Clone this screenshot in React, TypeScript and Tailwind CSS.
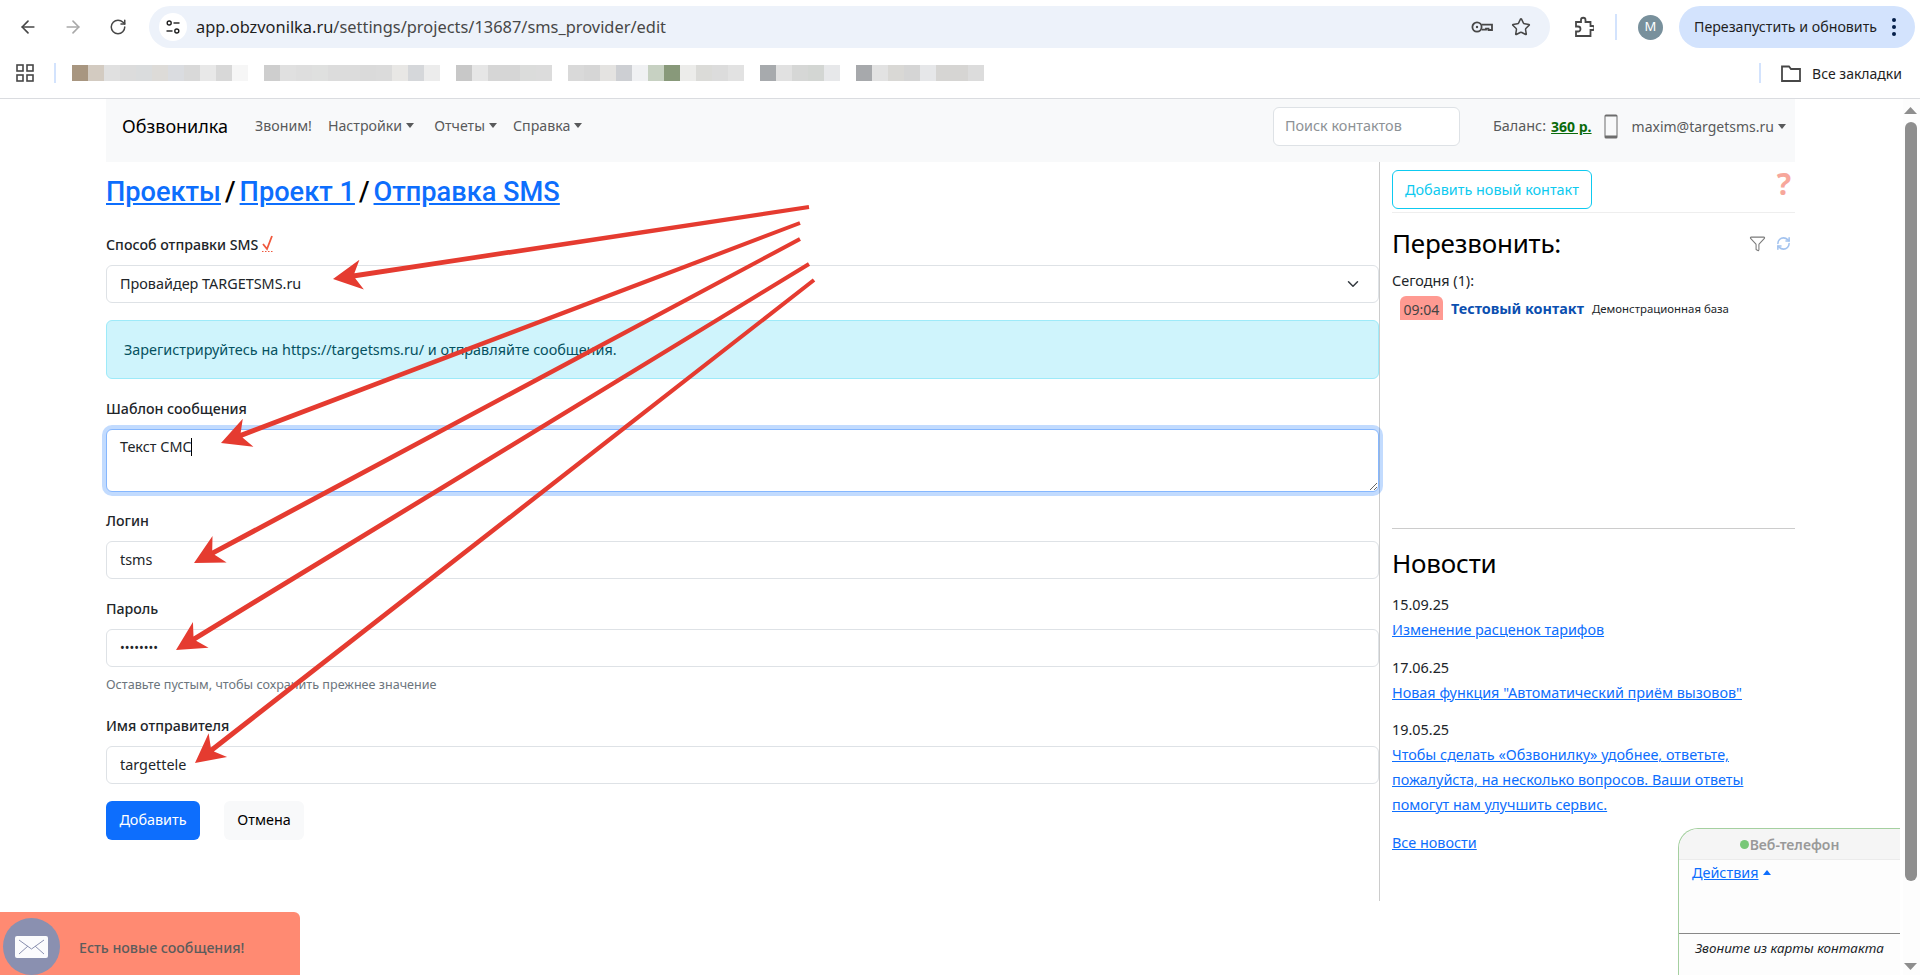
import { ArrowLeft, ArrowRight, RotateCw, Star, ChevronDown, Funnel, RefreshCw } from 'lucide-react';

const bookmarkGroups = [
  ['#a89680', '#d3cbc1', '#e0e0e0', '#dcdcdc', '#dadcdd', '#dddbd8', '#dadce0', '#d9d9d9', '#e8e8e8', '#d8d8d8', '#f6f6f6'],
  ['#cecece', '#e0e0e0', '#dedede', '#dfe0df', '#dcdcdc', '#dcdcdc', '#dadada', '#dbdbdb', '#e8e7e5', '#d5d7da', '#ececec'],
  ['#c8c8c8', '#e6e6e6', '#d6d6d6', '#d6d6d6', '#dbdcdb', '#dcdcdc'],
  ['#d9d9d9', '#d6d6d6', '#e4e3e1', '#cdcfd3', '#f0f1f3', '#c7d1c2', '#88997a', '#ececea', '#dbdbd8', '#dcdcdc', '#e2e2e2'],
  ['#a7aaad', '#e1e1e1', '#d6d7d6', '#d3d6d3', '#e7e8ea'],
  ['#a7a9ac', '#e2e2e2', '#d9d8d5', '#d5d5d5', '#e6e7e9', '#d6d5d3', '#d6d5d3', '#dcdcdc'],
];

const arrows = [
  { tail: [809, 207], tip: [333, 279] },
  { tail: [800, 223], tip: [221, 443] },
  { tail: [800, 239], tip: [194, 563] },
  { tail: [809, 264], tip: [176, 650] },
  { tail: [814, 280], tip: [195, 763] },
];

function arrowPoints(tail: number[], tip: number[]) {
  const dx = tip[0] - tail[0];
  const dy = tip[1] - tail[1];
  const len = Math.hypot(dx, dy);
  const ux = dx / len;
  const uy = dy / len;
  const nx = -uy;
  const ny = ux;
  const at = (back: number, side: number) =>
    `${tip[0] - ux * back + nx * side},${tip[1] - uy * back + ny * side}`;
  return [
    at(len, 2),
    at(22, 2.5),
    at(29, 15),
    at(0, 0),
    at(29, -15),
    at(22, -2.5),
    at(len, -2),
  ].join(' ');
}

function Caret({ up = false, color = '#595a5b' }: { up?: boolean; color?: string }) {
  return (
    <svg width="8" height="5" viewBox="0 0 8 5" className="ml-1 shrink-0">
      <path d={up ? 'M0 5 L4 0 L8 5 Z' : 'M0 0 L8 0 L4 5 Z'} fill={color} />
    </svg>
  );
}

function Field({ label, value, type = 'text', top }: { label: string; value: string; type?: string; top: string }) {
  return (
    <div className={top}>
      <label className="block h-[21px] text-[14.2px] leading-[19px] font-medium text-[#212529]">{label}</label>
      <input
        type={type}
        value={value}
        readOnly
        className={`mt-[9px] block h-[38px] w-full rounded-[6px] border border-[#dee2e6] bg-white px-[13px] pb-[2px] text-[#212529] outline-none ${type === 'password' ? 'text-[12.6px]' : 'text-[14.4px]'}`}
      />
    </div>
  );
}

function BrowserBar() {
  return (
    <div className="h-[98px] shrink-0 border-b border-[#dadce0] box-content text-[#1f1f1f]">
      <div className="flex h-[50px] items-center pt-[4px]">
        <ArrowLeft size={20} strokeWidth={2} className="ml-[18px] text-[#474747]" />
        <ArrowRight size={20} strokeWidth={2} className="ml-[25px] text-[#a9a9a9]" />
        <RotateCw size={18} strokeWidth={2} className="ml-[26px] text-[#474747]" />
        <div className="ml-[22px] flex h-[42px] w-[1401px] items-center rounded-full bg-[#edf2fa]">
          <div className="ml-[10px] flex h-[28px] w-[28px] items-center justify-center rounded-full bg-white">
            <svg width="16" height="16" viewBox="0 0 16 16" fill="none" stroke="#1f1f1f" strokeWidth="1.4">
              <circle cx="4.2" cy="4" r="2" />
              <path d="M8.5 4 H14.5" />
              <circle cx="11.8" cy="12" r="2" />
              <path d="M1.5 12 H7.5" />
            </svg>
          </div>
          <div className="ml-[9px] text-[16.4px] text-[#474747]">
            <span className="text-[#1f1f1f]">app.obzvonilka.ru</span>/settings/projects/13687/sms_provider/edit
          </div>
          <svg width="22" height="14" viewBox="0 0 22 14" fill="none" stroke="#474747" strokeWidth="1.8" className="ml-auto">
            <circle cx="6" cy="7" r="4.6" />
            <circle cx="6" cy="7" r="1.2" fill="#474747" stroke="none" />
            <path d="M10.6 4.6 H21 V10 H17.5 V8.6 H15 V9.6 H10.6" />
          </svg>
          <Star size={20} strokeWidth={1.8} className="ml-[18px] mr-[19px] text-[#474747]" />
        </div>
        <svg width="20" height="22" viewBox="0 0 20 22" fill="none" stroke="#474747" strokeWidth="1.8" className="ml-[24px]">
          <path d="M2 6 H7 V4 A2.2 2.2 0 0 1 11.5 4 V6 H16.5 V10 H18.5 A1.8 1.8 0 0 1 18.5 14 H16.5 V20 H2 V15.5 H4 A2.4 2.4 0 0 0 4 10.5 H2 Z" />
        </svg>
        <div className="ml-[21px] h-[26px] w-[2px] bg-[#d3e3fd]" />
        <div className="ml-[21px] flex h-[25px] w-[25px] items-center justify-center rounded-full bg-[#78909c] text-[13px] text-white">M</div>
        <div className="ml-[16px] flex h-[42px] w-[236px] items-center rounded-full bg-[#d3e3fd] pl-[15px]">
          <span className="w-[198px] text-[14.2px] whitespace-nowrap">Перезапустить и обновить</span>
          <span className="flex flex-col gap-[3px]">
            <span className="h-[4px] w-[4px] rounded-full bg-[#041e49]" />
            <span className="h-[4px] w-[4px] rounded-full bg-[#041e49]" />
            <span className="h-[4px] w-[4px] rounded-full bg-[#041e49]" />
          </span>
        </div>
      </div>
      <div className="flex h-[48px] items-center pb-[2px]">
        <svg width="18" height="18" viewBox="0 0 18 18" fill="none" stroke="#474747" strokeWidth="1.6" className="ml-[16px]">
          <rect x="1" y="1" width="6" height="6" />
          <rect x="11" y="1" width="6" height="6" />
          <rect x="1" y="11" width="6" height="6" />
          <rect x="11" y="11" width="6" height="6" />
        </svg>
        <div className="ml-[20px] h-[20px] w-[2px] bg-[#d3e3fd]" />
        <div className="ml-[16px] flex gap-[16px] blur-[0.6px]">
          {bookmarkGroups.map((group, i) => (
            <div key={i} className="flex">
              {group.map((c, j) => (
                <div key={j} className="h-[16px] w-[16px]" style={{ backgroundColor: c }} />
              ))}
            </div>
          ))}
        </div>
        <div className="ml-auto h-[20px] w-[2px] bg-[#d3e3fd]" />
        <svg width="20" height="17" viewBox="0 0 20 17" fill="none" stroke="#474747" strokeWidth="1.8" className="ml-[20px]">
          <path d="M1 1.5 H8 L10 4 H19 V16 H1 Z" />
        </svg>
        <span className="ml-[11px] mr-[18px] text-[14px]">Все закладки</span>
      </div>
    </div>
  );
}

function TopNav() {
  return (
    <nav className="flex h-[63px] items-center bg-[#f8f9fa] pb-[9px] text-[14px] text-[#595a5b]">
      <span className="ml-[16px] text-[18px] text-black">Обзвонилка</span>
      <span className="ml-[27px] text-[14.2px]">Звоним!</span>
      <span className="ml-[16px] flex items-center text-[14.2px]">Настройки<Caret /></span>
      <span className="ml-[20px] flex items-center text-[14.2px]">Отчеты<Caret /></span>
      <span className="ml-[16px] flex items-center text-[14.2px]">Справка<Caret /></span>
      <div className="ml-auto flex h-[39px] w-[187px] items-center rounded-[6px] border border-[#dee2e6] bg-white pl-[11px] text-[14.4px] text-[#8d9296]">
        Поиск контактов
      </div>
      <span className="ml-[33px] text-[14.4px]">Баланс:</span>
      <a className="ml-[5px] font-bold text-[#0a6b0a] underline">360 р.</a>
      <svg width="14" height="25" viewBox="0 0 14 25" className="ml-[12px]">
        <rect x="0.5" y="0.5" width="13" height="24" rx="1.5" fill="#6d6d6d" />
        <rect x="1.5" y="2.5" width="11" height="19" fill="#f8f9fa" />
      </svg>
      <span className="ml-[14px]">maxim@targetsms.ru</span>
      <Caret />
      <span className="w-[9px]" />
    </nav>
  );
}

function LeftColumn() {
  return (
    <div className="h-[739px] w-[1274px] shrink-0 border-r border-[#cccccc] text-[#212529]">
      <h2 className="mt-[11px] flex h-[38px] font-['Roboto',sans-serif] text-[27.2px] leading-[38px] font-medium text-black">
        <a className="text-[#0d6efd] underline">Проекты</a>
        <span className="mx-[4px]">/</span>
        <a className="text-[#0d6efd] underline">Проект 1</a>
        <span className="mx-[4px]">/</span>
        <a className="text-[#0d6efd] underline">Отправка SMS</a>
      </h2>

      <div className="mt-[24px] flex h-[21px] items-start text-[14.2px] leading-[19px] font-medium">
        Способ отправки SMS
        <svg width="14" height="18" viewBox="0 0 14 18" fill="none" className="ml-[3px]">
          <path d="M2 9 L6 14 L11 1" stroke="#f0593e" strokeWidth="1.8" />
          <path d="M1 16.5 H13" stroke="#f0593e" strokeWidth="1.2" strokeDasharray="1.5 1.5" />
        </svg>
      </div>
      <div className="mt-[9px] flex h-[38px] items-center rounded-[6px] border border-[#dee2e6] bg-white pl-[13px] pr-[16px] text-[14.4px]">
        Провайдер TARGETSMS.ru
        <ChevronDown size={18} strokeWidth={2} className="ml-auto text-[#343a40]" />
      </div>

      <div className="mt-[17px] flex h-[59px] items-center rounded-[6px] border border-[#9eeaf9] bg-[#cff4fc] pl-[17px] text-[14.4px] text-[#055160]">
        Зарегистрируйтесь на https://targetsms.ru/ и отправляйте сообщения.
      </div>

      <div className="mt-[20px]">
        <label className="block h-[21px] text-[14.2px] leading-[19px] font-medium">Шаблон сообщения</label>
        <div className="relative mt-[9px] h-[63px]">
          <textarea
            value="Текст СМС"
            readOnly
            className="block h-[63px] w-full rounded-[6px] border border-[#86b7fe] bg-white px-[13px] py-[6px] text-[14.4px] leading-[21px] shadow-[0_0_0_4px_rgba(13,110,253,0.25)] outline-none"
          />
          <span className="absolute left-[85px] top-[9px] h-[18px] w-px bg-black" />
        </div>
      </div>

      <Field label="Логин" value="tsms" top="mt-[19px]" />
      <Field label="Пароль" value="12345678" type="password" top="mt-[20px]" />
      <p className="mt-[9px] h-[18px] text-[12.6px] leading-[18px] text-[#6c757d]">Оставьте пустым, чтобы сохранить прежнее значение</p>
      <Field label="Имя отправителя" value="targettele" top="mt-[22px]" />

      <div className="mt-[17px] flex gap-[24px] text-[14.4px]">
        <button className="h-[39px] w-[94px] rounded-[6px] bg-[#0d6efd] pb-[2px] text-white">Добавить</button>
        <button className="h-[39px] w-[80px] rounded-[6px] bg-[#f8f9fa] pb-[2px] text-black">Отмена</button>
      </div>
    </div>
  );
}

function NewsItem({ date, title }: { date: string; title: string }) {
  return (
    <div className="mb-[12.5px]">
      <div className="h-[25px]">{date}</div>
      <a className="block text-[#0d6efd] underline">{title}</a>
    </div>
  );
}

function RightColumn() {
  return (
    <div className="ml-[12px] w-[403px] text-[14.4px] leading-[25px] text-[#212529]">
      <div className="mt-[8px] flex h-[43px] items-start justify-between border-b border-[#eeeeee]">
        <button className="h-[39px] w-[200px] rounded-[6px] border border-[#0dcaf0] text-[#0dcaf0]">Добавить новый контакт</button>
        <span className="mr-[4px] -mt-[4px] text-[30px] leading-[36px] font-bold text-[#f7a79b]">?</span>
      </div>
      <div className="mt-[11px] flex h-[38px] items-center">
        <h3 className="text-[26px] tracking-[-0.2px] leading-[38px] text-black">Перезвонить:</h3>
        <Funnel size={17} strokeWidth={1.5} className="ml-auto text-[#7a7a7a]" />
        <RefreshCw size={15} strokeWidth={2.5} className="ml-[10px] mr-[4px] text-[#a3c3ef]" />
      </div>
      <div className="mt-[6px] h-[25px] leading-[25px]">Сегодня (1):</div>
      <div className="mt-[3px] ml-[8px] flex h-[24px] items-center">
        <span className="flex h-[24px] w-[43px] items-end justify-center rounded-t-[6px] bg-[#ff9a92] text-[14px] leading-[20px] text-[#444444]">09:04</span>
        <a className="ml-[8px] font-bold text-[#0b4fb0]">Тестовый контакт</a>
        <span className="ml-[8px] text-[11.4px]">Демонстрационная база</span>
      </div>
      <div className="mt-[208px] border-t border-[#cccccc]" />
      <h3 className="mt-[15px] h-[38px] text-[26px] tracking-[-0.2px] leading-[38px] text-black">Новости</h3>
      <div className="mt-[10px]">
        <NewsItem date="15.09.25" title="Изменение расценок тарифов" />
        <NewsItem date="17.06.25" title={'Новая функция "Автоматический приём вызовов"'} />
        <NewsItem date="19.05.25" title="Чтобы сделать «Обзвонилку» удобнее, ответьте, пожалуйста, на несколько вопросов. Ваши ответы помогут нам улучшить сервис." />
        <a className="block text-[#0d6efd] underline">Все новости</a>
      </div>
    </div>
  );
}

export default function App() {
  return (
    <div className="relative flex h-[975px] w-[1920px] flex-col overflow-hidden bg-white font-['Noto_Sans','Open_Sans',sans-serif]">
      <BrowserBar />
      <div className="flex min-h-0 flex-1">
        <div className="w-[1903px] shrink-0 pl-[106px] pr-[108px]">
          <TopNav />
          <div className="flex">
            <LeftColumn />
            <RightColumn />
          </div>
        </div>
        <div className="flex w-[17px] flex-col items-center bg-[#fdfdfd] pr-[2px]">
          <svg width="13" height="7" viewBox="0 0 13 7" className="mt-[8px]"><path d="M6.5 0 L13 7 H0 Z" fill="#8e8e8e" /></svg>
          <div className="mt-[8px] h-[759px] w-[12px] rounded-[6px] bg-[#8e8e8e]" />
          <svg width="13" height="7" viewBox="0 0 13 7" className="mt-auto mb-[5px]"><path d="M0 0 H13 L6.5 7 Z" fill="#8e8e8e" /></svg>
        </div>
      </div>

      <div className="absolute bottom-0 left-0 flex h-[63px] w-[300px] items-center rounded-tr-[6px] bg-[#ff8a72]">
        <div className="ml-[3px] flex h-[57px] w-[57px] items-center justify-center self-end rounded-full bg-[#8a90b0]">
          <svg width="33" height="22" viewBox="0 0 33 22">
            <rect width="33" height="22" rx="2" fill="#fbfbfd" />
            <path d="M4 4 L16.5 13 L29 4 M4 18 L13 10 M29 18 L20 10" stroke="#8a90b0" strokeWidth="1" fill="none" />
          </svg>
        </div>
        <span className="ml-[19px] mt-[8px] text-[14.2px] font-medium text-[#5c5c5c]">Есть новые сообщения!</span>
      </div>

      <div className="absolute bottom-0 left-[1678px] top-[828px] w-[222px] rounded-tl-[20px] border-l border-t border-[#a5d0a0] bg-[#fdfdfd] text-[14px]">
        <div className="flex h-[31px] items-center justify-center rounded-tl-[20px] border-b border-[#ebebeb] bg-[#f5f5f5] font-semibold text-[#999999]">
          <span className="mr-[1px] h-[9px] w-[9px] rounded-full bg-[#78c878]" />
          Веб-телефон
        </div>
        <div className="ml-[13px] flex h-[25px] items-center text-[14.4px]">
          <a className="text-[#0d6efd] underline">Действия</a>
          <Caret up color="#0d6efd" />
        </div>
        <div className="mt-[48px] border-t border-[#888888]" />
        <div className="mt-[4px] text-center text-[13.4px] italic text-[#212529]">Звоните из карты контакта</div>
      </div>

      <svg width="1920" height="975" className="pointer-events-none absolute inset-0">
        {arrows.map((a, i) => (
          <polygon key={i} points={arrowPoints(a.tail, a.tip)} fill="#e53b30" />
        ))}
      </svg>
    </div>
  );
}
